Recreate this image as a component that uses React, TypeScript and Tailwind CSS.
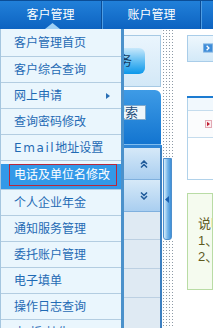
import { ReactNode } from "react";

const menuItems = [
  "客户管理首页",
  "客户综合查询",
  "网上申请",
  "查询密码修改",
  "Email地址设置",
  "电话及单位名修改",
  "个人企业年金",
  "通知服务管理",
  "委托账户管理",
  "电子填单",
  "操作日志查询",
  "卡(折)挂失",
];

function TopBar() {
  return (
    <div className="relative flex h-[29px] border-t border-[#0b4d96] bg-[linear-gradient(#2180d9,#0d63c1)] text-[12px] text-white">
      <div className="flex w-[101px] items-center justify-center">客户管理</div>
      <div className="w-[2px] border-l border-[#0a4d98] bg-[#4f9de3]" />
      <div className="flex w-[97px] items-center justify-center">账户管理</div>
      <div className="w-[2px] border-l border-[#0a4d98] bg-[#4f9de3]" />
      <div className="flex-1" />
      <svg className="absolute left-[45px] top-[22px]" width="15" height="6" viewBox="0 0 15 6">
        <polygon points="7.5,0 15,6 0,6" fill="#9fd0f4" />
      </svg>
    </div>
  );
}

function Menu() {
  return (
    <div className="absolute left-0 top-[29px] w-[124px] border-l border-r-[3px] border-l-[#a5c6df] border-r-[#4b91cb] bg-[#eaf6fd] text-[12px] text-[#1f6ab4]">
      {menuItems.map((label, i) => {
        const h = i === 0 ? "h-[28px]" : "h-[26px]";
        if (label === "电话及单位名修改") {
          return (
            <div key={label} className={`${h} border-b border-[#b3cde1] bg-[#3399e8]`}>
              <div className="ml-[8px] mr-[4px] mt-[3px] flex h-[22px] items-center border border-[#b8283c] pl-[4px] text-white">
                {label}
              </div>
            </div>
          );
        }
        let content: ReactNode = label;
        if (label.startsWith("Email")) {
          content = (
            <>
              <span className="font-['DejaVu_Sans',sans-serif] text-[12px] tracking-[1.6px]">Email</span>
              地址设置
            </>
          );
        }
        return (
          <div
            key={label}
            className={`${h} flex items-center justify-between border-b border-[#b3cde1] pl-[13px] pr-[11px]`}
          >
            <span>{content}</span>
            {label === "网上申请" && (
              <svg width="4" height="6" viewBox="0 0 4 6">
                <polygon points="0,0 4,3 0,6" fill="#2a6fb5" />
              </svg>
            )}
          </div>
        );
      })}
    </div>
  );
}

function DoubleChevron({ up }: { up: boolean }) {
  return (
    <svg width="8" height="8" viewBox="0 0 8 8">
      <path
        d={up ? "M1 4 L4 1 L7 4 M1 7.5 L4 4.5 L7 7.5" : "M1 0.5 L4 3.5 L7 0.5 M1 4 L4 7 L7 4"}
        stroke="#1f5a9a"
        strokeWidth="1.5"
        fill="none"
      />
    </svg>
  );
}

function LeftPanel() {
  return (
    <div className="flex w-[162px] shrink-0 flex-col">
      <div className="h-[6px] bg-[#f3f9fd]" />
      <div className="mr-[1px] flex h-[52px] items-center justify-end border border-[#a6c9e4] bg-[linear-gradient(#eaf5fd,#d3e8f7)] pr-[15px]">
        <div className="flex h-[26px] items-center rounded-[6px] bg-[linear-gradient(#c8e8fb,#63bff3_50%,#0b97ea)] pl-[10px] pr-[13px] text-[13px] text-[#143a60]">
          服务
        </div>
      </div>
      <div className="h-[3px] bg-white" />
      <div className="mr-[1px] flex h-[55px] items-start justify-end rounded-tr-[6px] border-b border-[#7fbdf0] bg-[linear-gradient(#3e9be6,#1375d0)] pr-[15px] pt-[15px]">
        <div className="flex h-[15px] items-center border border-[#7fa9cc] bg-[#eef6fb] pl-[6px] pr-[7px] text-[13px] leading-[13px] text-[#1a4a7a]">
          搜索
        </div>
      </div>
      <div className="h-[3px] bg-[#2f86d6]" />
      <div className="flex flex-1 flex-col border-r-2 border-[#3c7fc0]">
        <div className="flex h-[32px] items-center justify-end border-b border-[#7fb0de] bg-[linear-gradient(#d6e9f8,#a9cef0)] pr-[12px]">
          <DoubleChevron up />
        </div>
        <div className="flex h-[32px] items-center justify-end border-b border-[#7fb0de] bg-[linear-gradient(#d6e9f8,#a9cef0)] pr-[12px]">
          <DoubleChevron up={false} />
        </div>
        <div className="h-[28px] border-b border-[#bcd0e2] bg-[#dfeaf3]" />
        <div className="h-[29px] border-b border-[#bcd0e2] bg-[#dfeaf3]" />
        <div className="h-[29px] border-b border-[#bcd0e2] bg-[#dfeaf3]" />
        <div className="flex-1 bg-[#dfeaf3]" />
      </div>
    </div>
  );
}

function Strip() {
  const dots = "bg-[radial-gradient(#8d9aa6_0.7px,transparent_0.8px)] bg-[length:3px_3px]";
  return (
    <div className="flex w-[12px] shrink-0 flex-col bg-white">
      <div className={`h-[129px] ${dots}`} />
      <div className="ml-[1px] flex h-[82px] w-[9px] items-center rounded-b-[3px] border border-[#4f8fcc] bg-[linear-gradient(to_right,#d8eefb,#7ab8ea,#3d8fd8)] pl-[1px]">
        <svg width="4" height="7" viewBox="0 0 4 7">
          <polygon points="4,0 0,3.5 4,7" fill="#1a5fb0" />
        </svg>
      </div>
      <div className={`flex-1 ${dots}`} />
    </div>
  );
}

function RightPanel() {
  return (
    <div className="flex min-w-0 flex-1 flex-col bg-white">
      <div className="h-[6px]" />
      <div className="ml-[13px] flex h-[27px] items-start border-y border-l border-[#a9cde9] bg-[linear-gradient(#eef7fd,#d3e9f8)] pl-[15px] pt-[7px]">
        <svg width="11" height="10" viewBox="0 0 11 10">
          <rect x="0.5" y="0.5" width="10" height="9" fill="#3f8dd9" stroke="#7fb2e2" />
          <path d="M4 2.5 L6.5 5 L4 7.5" stroke="white" strokeWidth="1.5" fill="none" />
        </svg>
      </div>
      <div className="h-[34px]" />
      <div className="ml-[13px] h-[2px] bg-[#1c7bd1]" />
      <div className="ml-[13px] flex h-[82px] flex-col border-b border-l border-[#b1d2ea] bg-[#f1f8fd]">
        <div className="h-[12px]" />
        <div className="flex h-[28px] items-center border-y border-[#c5dced] bg-[#fbfcfd] pl-[17px]">
          <svg width="7" height="8" viewBox="0 0 7 8">
            <rect x="0.5" y="0.5" width="6" height="7" fill="#fbeef0" stroke="#e3a9b4" />
            <polygon points="2,1.8 5,4 2,6.2" fill="#c01e32" />
          </svg>
        </div>
        <div className="flex-1 bg-white" />
      </div>
      <div className="h-[13px]" />
      <div className="ml-[13px] h-[97px] overflow-hidden whitespace-nowrap border border-[#b9dca5] bg-[#f5fbef] pl-[10px] pt-[22px] text-[13px] leading-[16.5px] text-[#5f5a1e]">
        <div>说明：</div>
        <div>1、请您</div>
        <div>2、请您</div>
      </div>
    </div>
  );
}

export default function App() {
  return (
    <div className="relative h-[328px] w-[213px] overflow-hidden bg-white font-['Liberation_Sans','Noto_Sans_CJK_SC',sans-serif]">
      <TopBar />
      <div className="flex h-[299px]">
        <LeftPanel />
        <Strip />
        <RightPanel />
      </div>
      <Menu />
    </div>
  );
}
